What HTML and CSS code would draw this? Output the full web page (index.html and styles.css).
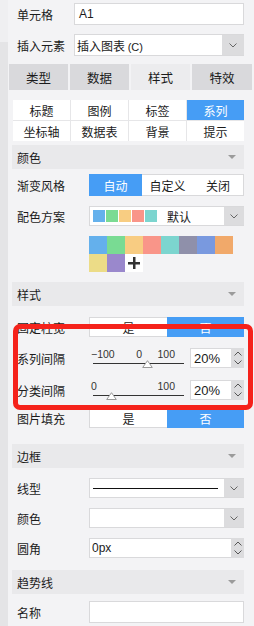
FILE: index.html
```html
<!DOCTYPE html>
<html lang="zh-CN">
<head>
  <meta charset="UTF-8" />
  <title>图表属性</title>
  <link rel="stylesheet" href="styles.css">
</head>
<body>
  <div class="app">
    <div class="rail"></div>

    <div class="panel">
      <div class="row r-cell">
        <span class="label narrow">单元格</span>
        <div class="input wide"><span class="txt">A1</span></div>
      </div>

      <div class="row r-insert">
        <span class="label narrow">插入元素</span>
        <div class="select wide">
          <span class="sel-text">插入图表 <span class="latin">(C)</span></span>
          <span class="drop w22"><svg width="8" height="5" viewBox="0 0 8 5"><polyline points="0.5,0.5 4,4 7.5,0.5" fill="none" stroke="#666" stroke-width="1"/></svg></span>
        </div>
      </div>

      <div class="tabs">
        <div class="tab">类型</div>
        <div class="tab">数据</div>
        <div class="tab active">样式</div>
        <div class="tab">特效</div>
      </div>

      <div class="subtabs">
        <div class="sub">标题</div>
        <div class="sub">图例</div>
        <div class="sub">标签</div>
        <div class="sub on">系列</div>
        <div class="sub">坐标轴</div>
        <div class="sub">数据表</div>
        <div class="sub">背景</div>
        <div class="sub">提示</div>
      </div>

      <div class="section s-color">颜色<span class="caret"></span></div>

      <div class="row r-grad">
        <span class="label">渐变风格</span>
        <div class="seg three">
          <span class="on">自动</span>
          <span>自定义</span>
          <span>关闭</span>
        </div>
      </div>

      <div class="row r-scheme">
        <span class="label">配色方案</span>
        <div class="select">
          <span class="swatches">
            <i style="background:#65b1ec"></i>
            <i style="background:#7bdb93"></i>
            <i style="background:#f8cd82"></i>
            <i style="background:#f99589"></i>
            <i style="background:#7cd5cf"></i>
          </span>
          <span class="sel-text scheme-name">默认</span>
          <span class="drop"><svg width="8" height="5" viewBox="0 0 8 5"><polyline points="0.5,0.5 4,4 7.5,0.5" fill="none" stroke="#666" stroke-width="1"/></svg></span>
        </div>
      </div>

      <div class="palette">
        <i style="background:#64b0ec"></i>
        <i style="background:#79db93"></i>
        <i style="background:#f8cc82"></i>
        <i style="background:#f99589"></i>
        <i style="background:#7cd5cf"></i>
        <i style="background:#8f90aa"></i>
        <i style="background:#7999df"></i>
        <i style="background:#f1a96a"></i>
        <i style="background:#ecdc87"></i>
        <i style="background:#9a88cc"></i>
        <i class="add"><svg width="12" height="12" viewBox="0 0 12 12"><rect x="5" y="0" width="2.5" height="12" fill="#333"/><rect x="0" y="5" width="12" height="2.5" fill="#333"/></svg></i>
      </div>

      <div class="section s-style">样式<span class="caret"></span></div>

      <div class="row r-fixed">
        <span class="label">固定柱宽</span>
        <div class="seg two">
          <span>是</span>
          <span class="on">否</span>
        </div>
      </div>

      <div class="row r-series">
        <span class="label">系列间隔</span>
        <div class="slider">
          <div class="ticks"><span>−100</span><span class="mid">0</span><span>100</span></div>
          <div class="track"><span class="thumb" style="left:54px"><svg width="11" height="8" viewBox="0 0 11 8"><polygon points="5.5,0.7 10.3,7.5 0.7,7.5" fill="#fff" stroke="#999"/></svg></span></div>
        </div>
        <div class="spin-input">
          <span class="num">20%</span>
          <span class="spin">
            <svg width="8" height="5" viewBox="0 0 8 5"><polyline points="0.5,4.5 4,1 7.5,4.5" fill="none" stroke="#555"/></svg>
            <svg width="8" height="5" viewBox="0 0 8 5"><polyline points="0.5,0.5 4,4 7.5,0.5" fill="none" stroke="#555"/></svg>
          </span>
        </div>
      </div>

      <div class="row r-cat">
        <span class="label">分类间隔</span>
        <div class="slider">
          <div class="ticks"><span>0</span><span>100</span></div>
          <div class="track"><span class="thumb" style="left:18px"><svg width="11" height="8" viewBox="0 0 11 8"><polygon points="5.5,0.7 10.3,7.5 0.7,7.5" fill="#fff" stroke="#999"/></svg></span></div>
        </div>
        <div class="spin-input">
          <span class="num">20%</span>
          <span class="spin">
            <svg width="8" height="5" viewBox="0 0 8 5"><polyline points="0.5,4.5 4,1 7.5,4.5" fill="none" stroke="#555"/></svg>
            <svg width="8" height="5" viewBox="0 0 8 5"><polyline points="0.5,0.5 4,4 7.5,0.5" fill="none" stroke="#555"/></svg>
          </span>
        </div>
      </div>

      <div class="row r-img">
        <span class="label">图片填充</span>
        <div class="seg two">
          <span>是</span>
          <span class="on">否</span>
        </div>
      </div>

      <div class="section s-border">边框<span class="caret"></span></div>

      <div class="row r-line">
        <span class="label">线型</span>
        <div class="select">
          <span class="line-sample"></span>
          <span class="drop"><svg width="8" height="5" viewBox="0 0 8 5"><polyline points="0.5,0.5 4,4 7.5,0.5" fill="none" stroke="#666" stroke-width="1"/></svg></span>
        </div>
      </div>

      <div class="row">
        <span class="label">颜色</span>
        <div class="select">
          <span class="sel-text"></span>
          <span class="drop"><svg width="8" height="5" viewBox="0 0 8 5"><polyline points="0.5,0.5 4,4 7.5,0.5" fill="none" stroke="#666" stroke-width="1"/></svg></span>
        </div>
      </div>

      <div class="row">
        <span class="label">圆角</span>
        <div class="spin-input full">
          <span class="num small">0px</span>
          <span class="spin">
            <svg width="8" height="5" viewBox="0 0 8 5"><polyline points="0.5,4.5 4,1 7.5,4.5" fill="none" stroke="#555"/></svg>
            <svg width="8" height="5" viewBox="0 0 8 5"><polyline points="0.5,0.5 4,4 7.5,0.5" fill="none" stroke="#555"/></svg>
          </span>
        </div>
      </div>

      <div class="section s-trend">趋势线<span class="caret"></span></div>

      <div class="row r-name">
        <span class="label">名称</span>
        <div class="input"></div>
      </div>
    </div>

    <div class="highlight"></div>
  </div>
</body>
</html>
```

FILE: styles.css
```css
body {
  margin: 0;
  font-family: "Noto Sans CJK SC", "Liberation Sans", sans-serif;
  font-size: 12px;
  color: #1b1b1b;
  background: #f3f3f5;
}
.app {
  position: relative;
  display: flex;
  width: 254px;
  height: 626px;
  overflow: hidden;
}
.rail {
  width: 8px;
  flex-shrink: 0;
  background: linear-gradient(#efeff1 0 42px, #e4e4e6 42px);
}
.panel {
  flex: 1;
}

/* rows */
.row {
  display: flex;
  align-items: center;
  height: 20px;
  margin-top: 10px;
}
.label {
  width: 72px;
  padding-left: 9px;
  flex-shrink: 0;
  white-space: nowrap;
}
.label.narrow {
  width: 57px;
}
.r-cell { margin-top: 3px; height: 22px; }
.r-insert { margin-top: 9px; height: 22px; }
.r-grad { margin-top: 5px; height: 22px; }
.r-fixed { margin-top: 11px; }
.r-series { margin-top: 11px; }
.r-cat { margin-top: 12px; }
.r-img { margin-top: 8px; }
.r-name { margin-top: 7px; height: 22px; }

/* inputs */
.input, .select {
  box-sizing: border-box;
  width: 155px;
  height: 100%;
  background: #fff;
  border: 1px solid #d9d9db;
  display: flex;
  align-items: center;
}
.input.wide, .select.wide {
  width: 170px;
}
.txt {
  padding-left: 4px;
  font-family: "Liberation Sans", sans-serif;
  font-size: 12px;
}
.sel-text {
  flex: 1;
  padding-left: 2px;
  font-size: 12px;
}
.latin {
  font-family: "Liberation Sans", sans-serif;
  font-size: 11px;
}
.drop {
  width: 20px;
  height: 100%;
  background: #dcdcde;
  display: flex;
  align-items: center;
  justify-content: center;
  margin-right: -1px;
}
.drop.w22 {
  width: 22px;
}

/* tabs */
.tabs {
  display: grid;
  grid-template-columns: 59px 59px 59px 60px;
  gap: 2px;
  margin: 8px 0 0 1px;
  height: 26px;
}
.tab {
  background: #d9d9dc;
  display: flex;
  align-items: center;
  justify-content: center;
  font-size: 12.5px;
}
.tab.active {
  background: #ececee;
}
.subtabs {
  display: grid;
  grid-template-columns: repeat(4, 57px);
  grid-template-rows: 20px 20px;
  gap: 1px;
  margin: 10px 0 0 5px;
  width: 231px;
  background: #e6e6e8;
}
.sub {
  background: #fff;
  display: flex;
  align-items: center;
  justify-content: center;
}
.sub.on {
  background: #469df5;
  color: #fff;
}

/* section headers */
.section {
  display: flex;
  align-items: center;
  justify-content: space-between;
  height: 24px;
  width: 232px;
  box-sizing: border-box;
  margin-left: 4px;
  padding: 0 8px 0 5px;
  background: #e9e9eb;
}
.s-color { margin-top: 4px; }
.s-style { margin-top: 10px; }
.s-border { margin-top: 16px; }
.s-trend { margin-top: 12px; }
.caret {
  width: 0;
  height: 0;
  border-left: 4px solid transparent;
  border-right: 4px solid transparent;
  border-top: 4px solid #9b9b9b;
}

/* segmented buttons */
.seg {
  display: grid;
  box-sizing: border-box;
  width: 155px;
  height: 100%;
  background: #fff;
  border: 1px solid #d9d9db;
}
.seg.three { grid-template-columns: 52px 51px 1fr; }
.seg.two { grid-template-columns: 77px 1fr; }
.seg span {
  display: flex;
  align-items: center;
  justify-content: center;
}
.seg .on {
  background: #469df5;
  color: #fff;
  margin: -1px;
}
.seg.three .on { margin-right: 0; }
.seg.two .on { margin-left: 0; }

/* colour scheme */
.swatches {
  display: flex;
  gap: 1px;
  padding-left: 3px;
}
.swatches i {
  width: 12px;
  height: 12px;
}
.scheme-name {
  padding-left: 10px;
}
.palette {
  display: grid;
  grid-template-columns: repeat(8, 18px);
  grid-template-rows: 18px 18px;
  margin: 10px 0 0 81px;
}
.palette i {
  display: block;
}
.palette .add {
  background: #fff;
  display: flex;
  align-items: center;
  justify-content: center;
}

/* sliders */
.slider {
  width: 93px;
  margin: 0 6px 0 2px;
  align-self: flex-start;
}
.ticks {
  display: flex;
  justify-content: space-between;
  width: 84px;
  height: 13px;
  font-family: "Liberation Sans", sans-serif;
  font-size: 10.5px;
  line-height: 13px;
  color: #333;
}
.ticks .mid {
  margin-left: 6px;
}
.track {
  position: relative;
  margin: 2px 0 0 2px;
  width: 91px;
  height: 1px;
  background: #333;
}
.thumb {
  position: absolute;
  top: -3px;
  margin-left: -5px;
  width: 11px;
  height: 8px;
  line-height: 0;
}
.spin-input {
  display: flex;
  box-sizing: border-box;
  width: 54px;
  height: 100%;
  background: #fff;
  border: 1px solid #d9d9db;
}
.spin-input.full {
  width: 155px;
}
.num {
  flex: 1;
  padding-left: 3px;
  display: flex;
  align-items: center;
  font-family: "Liberation Sans", sans-serif;
  font-size: 13px;
}
.num.small {
  padding-left: 2px;
  font-size: 12px;
}
.spin {
  width: 13px;
  margin: -1px -1px -1px 0;
  background: #dcdcde;
  display: flex;
  flex-direction: column;
  align-items: center;
  justify-content: space-evenly;
}
.line-sample {
  flex: 1;
  height: 1px;
  background: #111;
  margin: 0 6px 0 3px;
}

/* annotation */
.highlight {
  position: absolute;
  left: 13px;
  top: 324px;
  width: 240px;
  height: 86px;
  box-sizing: border-box;
  border: 5px solid #f5221b;
  border-radius: 7px;
}
```
